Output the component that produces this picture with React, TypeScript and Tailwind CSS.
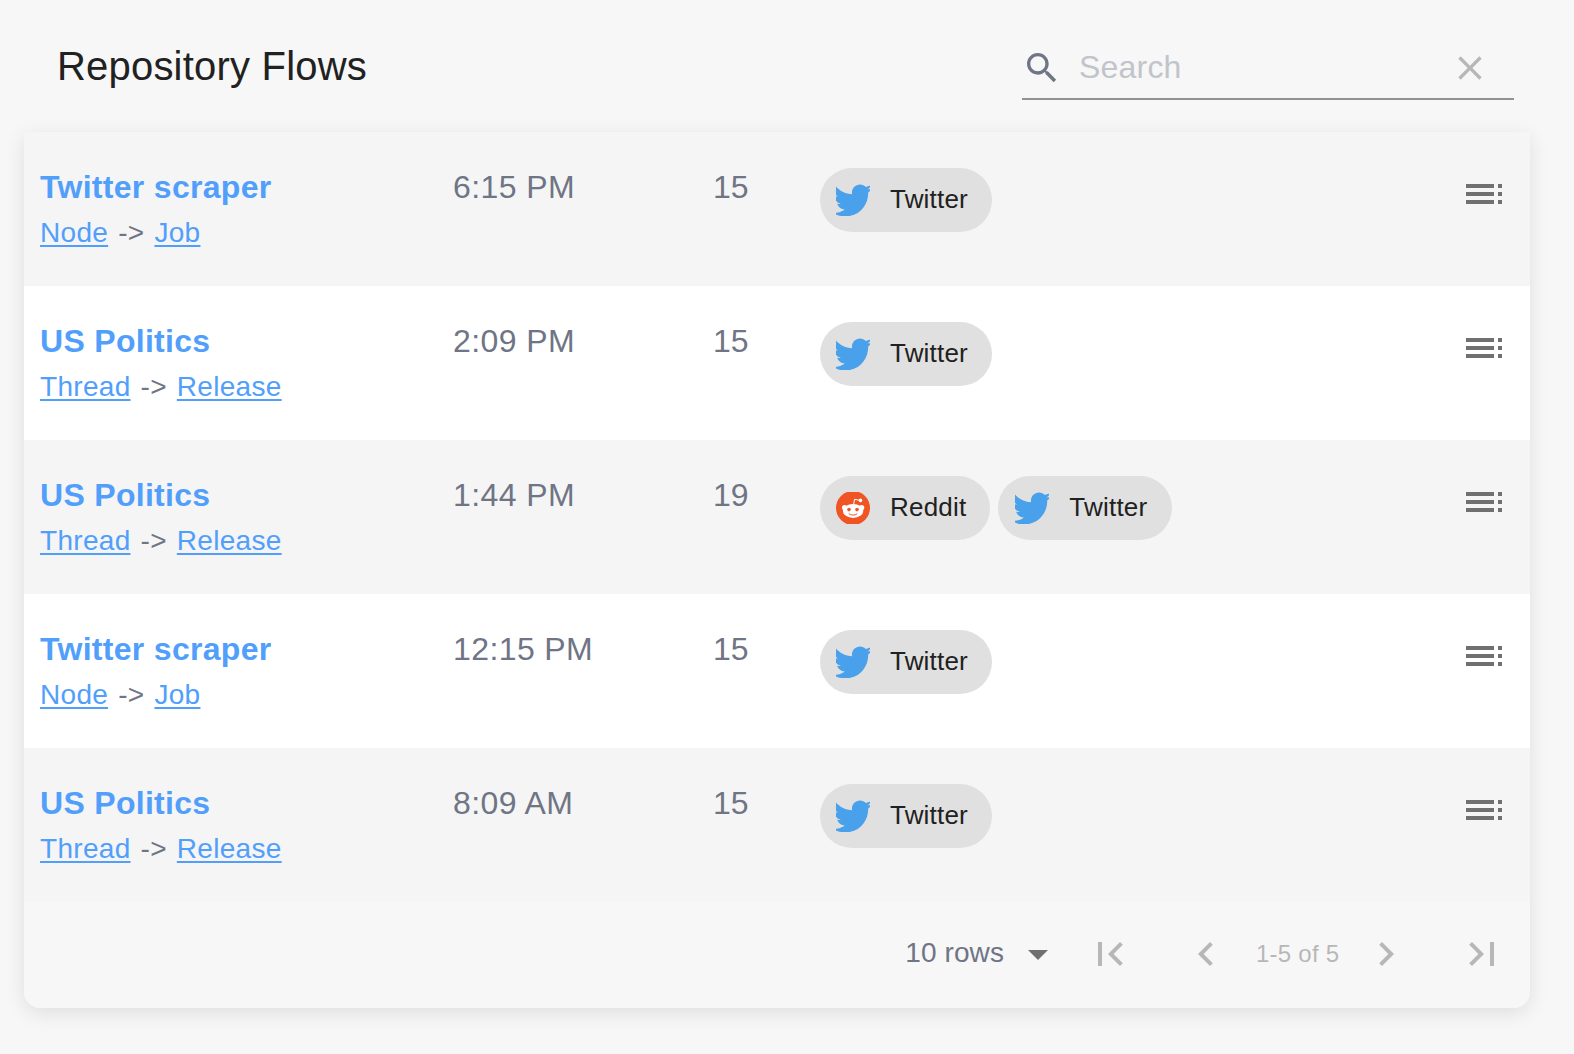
import React from "react";

type Source = "Twitter" | "Reddit";

interface Flow {
  name: string;
  from: string;
  to: string;
  time: string;
  count: number;
  sources: Source[];
}

const flows: Flow[] = [
  { name: "Twitter scraper", from: "Node", to: "Job", time: "6:15 PM", count: 15, sources: ["Twitter"] },
  { name: "US Politics", from: "Thread", to: "Release", time: "2:09 PM", count: 15, sources: ["Twitter"] },
  { name: "US Politics", from: "Thread", to: "Release", time: "1:44 PM", count: 19, sources: ["Reddit", "Twitter"] },
  { name: "Twitter scraper", from: "Node", to: "Job", time: "12:15 PM", count: 15, sources: ["Twitter"] },
  { name: "US Politics", from: "Thread", to: "Release", time: "8:09 AM", count: 15, sources: ["Twitter"] },
];

function Icon({ d, className }: { d: string; className: string }) {
  return (
    <svg viewBox="0 0 24 24" fill="currentColor" className={`shrink-0 ${className}`}>
      <path d={d} />
    </svg>
  );
}

const paths = {
  search:
    "M15.5 14h-.79l-.28-.27C15.41 12.59 16 11.11 16 9.5 16 5.91 13.09 3 9.5 3S3 5.91 3 9.5 5.91 16 9.5 16c1.61 0 3.09-.59 4.23-1.57l.27.28v.79l5 4.99L20.49 19l-4.99-5zm-6 0C7.01 14 5 11.99 5 9.5S7.01 5 9.5 5 14 7.01 14 9.5 11.99 14 9.5 14z",
  close:
    "M19 6.41L17.59 5 12 10.59 6.41 5 5 6.41 10.59 12 5 17.59 6.41 19 12 13.41 17.59 19 19 17.59 13.41 12z",
  toc: "M3 9h14V7H3v2zm0 4h14v-2H3v2zm0 4h14v-2H3v2zm16 0h2v-2h-2v2zm0-10v2h2V7h-2zm0 6h2v-2h-2v2z",
  dropDown: "M7 10l5 5 5-5z",
  first: "M18.41 16.59L13.82 12l4.59-4.59L17 6l-6 6 6 6zM6 6h2v12H6z",
  prev: "M15.41 7.41L14 6l-6 6 6 6 1.41-1.41L10.83 12z",
  next: "M10 6L8.59 7.41 13.17 12l-4.58 4.59L10 18l6-6z",
  last: "M5.59 7.41L10.18 12l-4.59 4.59L7 18l6-6-6-6zM16 6h2v12h-2z",
};

function TwitterIcon() {
  return (
    <svg viewBox="0.3 2 24 19.5" preserveAspectRatio="xMidYMid slice" fill="#4aa1eb" className="h-8 w-[34px] shrink-0">
      <path d="M23.954 4.569c-.885.389-1.83.654-2.825.775 1.014-.611 1.794-1.574 2.163-2.723-.951.555-2.005.959-3.127 1.184-.896-.959-2.173-1.559-3.591-1.559-2.717 0-4.92 2.203-4.92 4.917 0 .39.045.765.127 1.124C7.691 8.094 4.066 6.13 1.64 3.161c-.427.722-.666 1.561-.666 2.475 0 1.71.87 3.213 2.188 4.096-.807-.026-1.566-.248-2.228-.616v.061c0 2.385 1.693 4.374 3.946 4.827-.413.111-.849.171-1.296.171-.314 0-.615-.03-.916-.086.631 1.953 2.445 3.377 4.604 3.417-1.68 1.319-3.809 2.105-6.102 2.105-.39 0-.779-.023-1.17-.067 2.189 1.394 4.768 2.209 7.557 2.209 9.054 0 13.999-7.496 13.999-13.986 0-.209 0-.42-.015-.63.961-.689 1.8-1.56 2.46-2.548z" />
    </svg>
  );
}

function RedditIcon() {
  return (
    <svg viewBox="0 0 34 32" className="h-8 w-[34px] shrink-0">
      <circle cx="17" cy="16" r="17" fill="#f05423" />
      <path d="M17.7 12.5 18.5 7.3 23 8.2" fill="none" stroke="#fff" strokeWidth="1" strokeLinejoin="round" />
      <circle cx="24.5" cy="8.4" r="1.8" fill="#fff" />
      <circle cx="8.6" cy="15.6" r="2.7" fill="#fff" />
      <circle cx="25.6" cy="15.6" r="2.7" fill="#fff" />
      <ellipse cx="17.1" cy="18.9" rx="10.2" ry="7" fill="#fff" />
      <circle cx="13" cy="17.6" r="1.8" fill="#f05423" />
      <circle cx="21" cy="17.6" r="1.8" fill="#f05423" />
      <path d="M13 21.9c2 1.7 6 1.7 8 0" fill="none" stroke="#f05423" strokeWidth="1" strokeLinecap="round" />
    </svg>
  );
}

function Chip({ source }: { source: Source }) {
  return (
    <div className="flex h-16 items-center rounded-full bg-[#e0e0e0] pl-4 pr-6 not-first:pl-[17px] not-first:pr-[25px]">
      {source === "Twitter" ? <TwitterIcon /> : <RedditIcon />}
      <span className="ml-5 pb-0.5 text-[26px] leading-8 tracking-[0.2px] text-[#212121]">{source}</span>
    </div>
  );
}

function FlowRow({ flow }: { flow: Flow }) {
  return (
    <div className="flex h-[154px] items-start bg-white px-4 odd:bg-[#f5f5f5]">
      <div className="w-[413px] pt-8 text-[#519ffb]">
        <div className="text-[32px] font-bold leading-[46px] tracking-[0.3px]">{flow.name}</div>
        <div className="flex gap-[10px] text-[28px] leading-[46px] tracking-[0.3px]">
          <a className="underline decoration-2 underline-offset-[3px]">{flow.from}</a>
          <span className="text-[#6f7585]">-&gt;</span>
          <a className="underline decoration-2 underline-offset-[3px]">{flow.to}</a>
        </div>
      </div>
      <div className="w-[260px] pt-8 text-[32px] leading-[46px] tracking-[0.4px] text-[#6f7585]">{flow.time}</div>
      <div className="w-[107px] pt-8 text-[32px] leading-[46px] text-[#6f7585]">{flow.count}</div>
      <div className="flex flex-1 gap-2 pt-9">
        {flow.sources.map((s) => (
          <Chip key={s} source={s} />
        ))}
      </div>
      <button className="mr-[6px] mt-[38px]">
        <Icon d={paths.toc} className="size-12 text-[#707070]" />
      </button>
    </div>
  );
}

function PageButton({ d }: { d: string }) {
  return (
    <button className="flex size-24 items-center justify-center text-[#b7b7b7]">
      <Icon d={d} className="size-12" />
    </button>
  );
}

export default function App() {
  return (
    <div className="h-[1054px] w-[1574px] bg-[#f7f7f7] px-6 font-['Liberation_Sans',Arial,sans-serif]">
      <header className="flex h-[132px] items-start justify-between pl-[33px] pr-4">
        <h1 className="mt-[41px] text-[40px] leading-[50px] tracking-[0.2px] text-[#212121]">Repository Flows</h1>
        <div className="mr-5 mt-9 flex h-16 w-[492px] items-center border-b-2 border-[#919191]">
          <Icon d={paths.search} className="mt-px size-10 text-[#6f7585]" />
          <span className="ml-[17px] flex-1 text-[32px] leading-10 tracking-[0.2px] text-[#c1c4cb]">Search</span>
          <Icon d={paths.close} className="mr-6 mt-0.5 size-10 text-[#b7b7b7]" />
        </div>
      </header>
      <main className="w-[1506px] overflow-hidden rounded-b-2xl shadow-[0_5px_20px_rgba(0,0,0,0.1)]">
        <div>
          {flows.map((f, i) => (
            <FlowRow key={i} flow={f} />
          ))}
        </div>
        <footer className="flex h-[106px] items-center justify-end bg-[#f7f7f7] pb-[2px]">
          <span className="pb-0.5 text-[28px] leading-8 tracking-[0.1px] text-[#6f7585]">10 rows</span>
          <Icon d={paths.dropDown} className="ml-[10px] size-12 text-[#707070]" />
          <PageButton d={paths.first} />
          <PageButton d={paths.prev} />
          <span className="w-[84px] whitespace-nowrap pl-[2px] text-center text-2xl tracking-[0.25px] text-[#b7b7b7]">1-5 of 5</span>
          <PageButton d={paths.next} />
          <PageButton d={paths.last} />
        </footer>
      </main>
    </div>
  );
}
